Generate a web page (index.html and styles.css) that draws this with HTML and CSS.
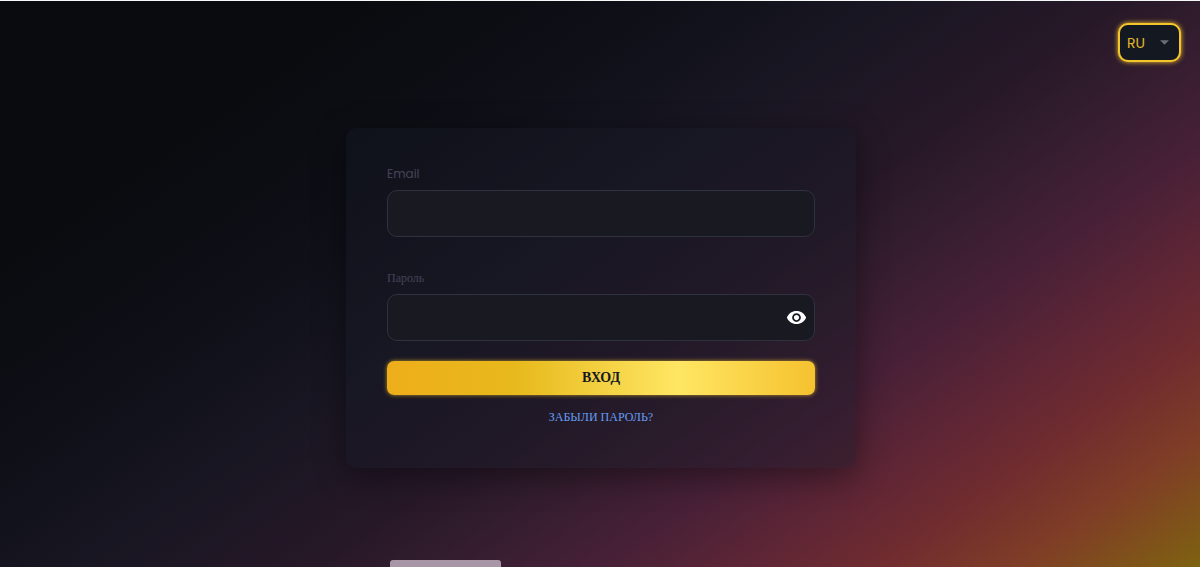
FILE: index.html
```html
<!DOCTYPE html>
<html lang="ru">
<head>
<meta charset="utf-8">
<meta name="viewport" content="width=device-width, initial-scale=1">
<title>Вход</title>
<link rel="stylesheet" href="styles.css">
</head>
<body>
<div class="page">
  <header class="topbar">
    <div class="lang">
      <select class="lang-select" aria-label="Язык">
        <option>RU</option>
        <option>EN</option>
      </select>
      <svg class="lang-arrow" viewBox="0 0 10 5" aria-hidden="true"><path d="M0 0h10L5 5z"/></svg>
    </div>
  </header>
  <main class="main">
    <form class="card">
      <div class="field">
        <label class="label label-latin" for="email">Email</label>
        <input class="input" id="email" type="email">
      </div>
      <div class="field">
        <label class="label" for="password">Пароль</label>
        <div class="password">
          <input class="input" id="password" type="password">
          <button class="eye" type="button" aria-label="Показать пароль">
            <svg viewBox="0 0 24 24" aria-hidden="true"><path d="M12 4.5C7 4.500 2.730 7.610 1 12c1.730 4.390 6 7.500 11 7.500s9.270-3.110 11-7.500c-1.730-4.390-6-7.500-11-7.500zM12 17c-2.760 0-5-2.240-5-5s2.240-5 5-5 5 2.240 5 5-2.240 5-5 5zm0-8c-1.660 0-3 1.340-3 3s1.340 3 3 3 3-1.340 3-3-1.340-3-3-3z"/></svg>
          </button>
        </div>
      </div>
      <button class="submit" type="submit">ВХОД</button>
      <a class="forgot" href="#">ЗАБЫЛИ ПАРОЛЬ?</a>
    </form>
  </main>
  <div class="toast"></div>
</div>
</body>
</html>
```
FILE: styles.css
```css
* { box-sizing: border-box; }

body {
  margin: 0;
  font-family: "Liberation Serif", serif;
}

.page {
  position: relative;
  display: flex;
  flex-direction: column;
  min-height: 100vh;
  overflow: hidden;
  border-top: 1px solid #f4f8f6;
  background: linear-gradient(145deg, #0a0b0e 0%, #0a0b0f 18%, #0f1018 34%, #181622 44%, #271828 56%, #331d2e 62%, #472037 70%, #602635 78%, #702c2f 84%, #7f3e26 91%, #7e6210 100%);
}

.topbar {
  display: flex;
  justify-content: flex-end;
  padding: 22px 19px 0;
}

.lang {
  position: relative;
  width: 63px;
  height: 39px;
}

.lang-select {
  width: 100%;
  height: 100%;
  padding: 0 7px;
  appearance: none;
  border: 2px solid #f5c62c;
  border-radius: 10px;
  background: #141821;
  box-shadow: 0 0 5px #f5c62c;
  color: #e5b82a;
  font: 14px Poppins, "Noto Sans", sans-serif;
}

.lang-arrow {
  position: absolute;
  top: 17px;
  right: 12px;
  width: 9px;
  height: 5px;
  fill: #6c6d76;
  pointer-events: none;
}

.main {
  display: flex;
  justify-content: center;
  padding: 66px 16px 98px;
}

.card {
  display: flex;
  flex-direction: column;
  width: 100%;
  max-width: 510px;
  margin-left: 2px;
  padding: 37px 41px 43px;
  border-radius: 10px;
  background: rgba(23, 26, 37, 0.4);
  box-shadow: 0 8px 32px rgba(0, 0, 0, 0.4);
}

.field {
  display: flex;
  flex-direction: column;
  margin-bottom: 32px;
}

.field + .field { margin-bottom: 20px; }

.label {
  margin-bottom: 7px;
  color: #454359;
  font-size: 12px;
  line-height: 18px;
}

.label-latin { font-family: Poppins, Lato, sans-serif; }

.input {
  width: 100%;
  height: 47px;
  padding: 0 14px;
  border: 1px solid #30313f;
  border-radius: 10px;
  outline: none;
  background: #191922;
  color: #ffffff;
  font: 14px "Noto Sans", sans-serif;
}

.password { position: relative; }

.password .input { display: block; padding-right: 44px; }

.eye {
  position: absolute;
  top: 13px;
  right: 8px;
  width: 21px;
  height: 21px;
  padding: 0;
  border: 0;
  background: none;
  fill: #ffffff;
  cursor: pointer;
}

.eye svg { display: block; }

.submit {
  height: 34px;
  padding: 0;
  border: 0;
  border-radius: 7px;
  background: linear-gradient(90deg, #eeae1b 0%, #e7b91c 30%, #ffe663 68%, #f5c22f 100%);
  box-shadow: 0 0 4px rgba(245, 198, 44, 0.7);
  color: #141821;
  font: bold 14px "Liberation Serif", serif;
  cursor: pointer;
}

.forgot {
  align-self: center;
  margin-top: 14px;
  color: #659df2;
  font-size: 12px;
  line-height: 16px;
  text-decoration: none;
}

.toast {
  position: absolute;
  bottom: 0;
  left: 390px;
  width: 111px;
  height: 7px;
  border-radius: 3px 3px 0 0;
  background: #a895a6;
}
```
